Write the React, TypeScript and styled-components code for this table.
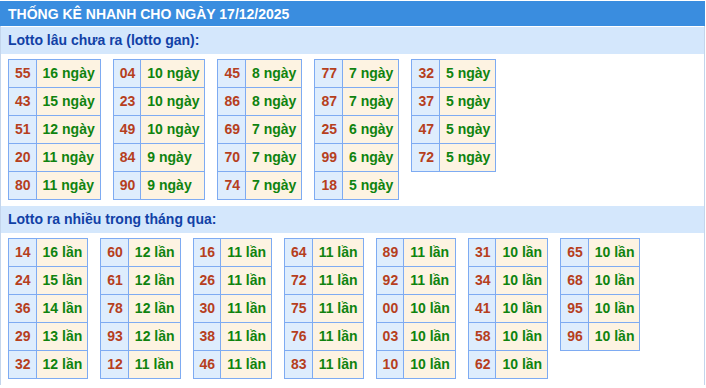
import { createGlobalStyle } from "styled-components";
import styled from "styled-components";

const GlobalStyle = createGlobalStyle`
    body {
        margin: 0;
        background: #fff;
        font-family: "Liberation Sans", Arial, sans-serif;
    }
`;

const Wrapper = styled.div`
    width: 705px;
    padding-top: 1px;
`;

const Header = styled.div`
    height: 25px;
    line-height: 26px;
    padding-left: 8px;
    background-color: #3a8ddf;
    color: #fff;
    font-size: 14px;
    font-weight: bold;
    text-transform: uppercase;
`;

const Body = styled.div`
    border-left: 1px solid #c3d5ec;
    border-right: 1px solid #c3d5ec;
    padding-top: 1px;
`;

const SubTitle = styled.div`
    height: 27px;
    line-height: 27px;
    padding-left: 7px;
    background-color: #d4e7fc;
    color: #1141a6;
    font-size: 14px;
    font-weight: bold;
`;

const TableRow = styled.div`
    display: flex;
    align-items: flex-start;
    gap: 12px;
    padding: 5px 7px 6px;
`;

const Table = styled.table`
    border-collapse: collapse;
    font-size: 14px;
    font-weight: bold;
`;

const Cell = styled.td<{ $num?: boolean }>`
    border: 1px solid #7eabf2;
    line-height: 27px;
    padding: 0 5px 0 6px;
    white-space: nowrap;
    text-align: ${(p) => (p.$num ? "center" : "left")};
    background-color: ${(p) => (p.$num ? "#deedfd" : "#fdf3e2")};
    color: ${(p) => (p.$num ? "#b63f1d" : "#0f830f")};
`;

type Item = [string, number];

const ganData: Item[][] = [
    [["55", 16], ["43", 15], ["51", 12], ["20", 11], ["80", 11]],
    [["04", 10], ["23", 10], ["49", 10], ["84", 9], ["90", 9]],
    [["45", 8], ["86", 8], ["69", 7], ["70", 7], ["74", 7]],
    [["77", 7], ["87", 7], ["25", 6], ["99", 6], ["18", 5]],
    [["32", 5], ["37", 5], ["47", 5], ["72", 5]],
];

const nhieuData: Item[][] = [
    [["14", 16], ["24", 15], ["36", 14], ["29", 13], ["32", 12]],
    [["60", 12], ["61", 12], ["78", 12], ["93", 12], ["12", 11]],
    [["16", 11], ["26", 11], ["30", 11], ["38", 11], ["46", 11]],
    [["64", 11], ["72", 11], ["75", 11], ["76", 11], ["83", 11]],
    [["89", 11], ["92", 11], ["00", 10], ["03", 10], ["10", 10]],
    [["31", 10], ["34", 10], ["41", 10], ["58", 10], ["62", 10]],
    [["65", 10], ["68", 10], ["95", 10], ["96", 10]],
];

function LottoTables({ data, unit }: { data: Item[][]; unit: string }) {
    return (
        <TableRow>
            {data.map((col, i) => (
                <Table key={i}>
                    <tbody>
                        {col.map(([num, count]) => (
                            <tr key={num}>
                                <Cell $num>{num}</Cell>
                                <Cell>{count} {unit}</Cell>
                            </tr>
                        ))}
                    </tbody>
                </Table>
            ))}
        </TableRow>
    );
}

function App() {
    return (
        <Wrapper>
            <GlobalStyle />
            <Header>Thống kê nhanh cho ngày 17/12/2025</Header>
            <Body>
                <SubTitle>Lotto lâu chưa ra (lotto gan):</SubTitle>
                <LottoTables data={ganData} unit="ngày" />
                <SubTitle>Lotto ra nhiều trong tháng qua:</SubTitle>
                <LottoTables data={nhieuData} unit="lần" />
            </Body>
        </Wrapper>
    );
}

export default App;
